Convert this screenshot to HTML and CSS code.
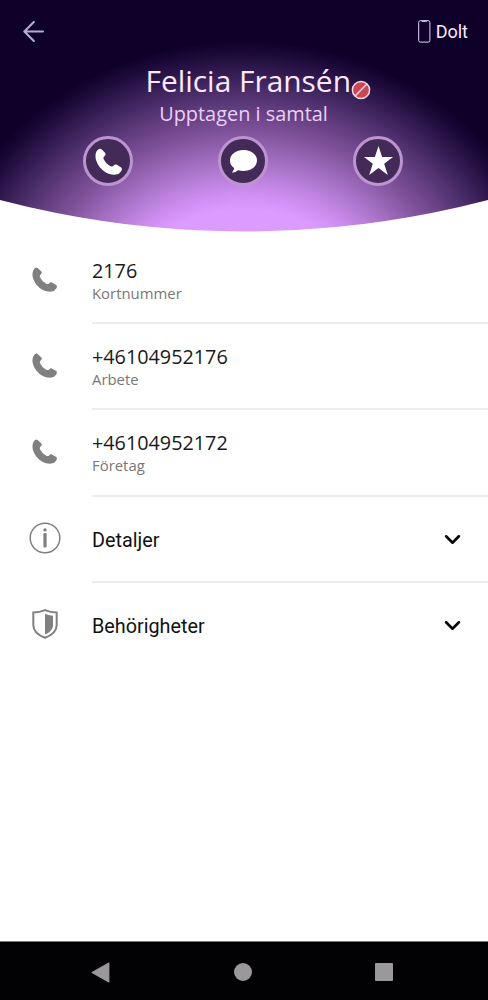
FILE: index.html
```html
<!DOCTYPE html>
<html lang="sv">
<head>
<meta charset="utf-8">
<title>Felicia Fransén</title>
<link rel="stylesheet" href="styles.css">
</head>
<body>
<svg class="defs" width="0" height="0">
  <symbol id="phone" viewBox="0 0 26 26">
    <path d="M1.500 3.200Q3.400 .2 5.300 .7Q6.600 1.200 9.800 4.800Q10.800 6.300 9.200 7.600Q7.700 9 8.300 10.600Q10.500 15.400 15.200 17.600Q16.900 18.200 18 16.800Q19.200 15.300 20.700 16L25.200 18.800Q26.600 20.200 25.200 22.300Q23.600 25.100 20 25.600Q11 26.300 4.400 18.200Q-1.600 9.800 1.500 3.200Z"/>
  </symbol>
  <symbol id="chevron" viewBox="0 0 16 10">
    <path d="M2 2l6 6 6-6" fill="none" stroke="currentColor" stroke-width="2.500" stroke-linecap="round" stroke-linejoin="round"/>
  </symbol>
</svg>
<div class="screen">
  <header class="hero">
    <div class="topbar">
      <svg class="back" viewBox="0 0 20 20"><path d="M19 10H1.500M10.300 1L1.300 10l9 9" /></svg>
      <div class="visibility">
        <svg class="device" viewBox="0 0 13 23"><rect x=".7" y=".7" width="11.200" height="21.400" rx="1.700"/><path d="M3.800 1.300h5"/></svg>
        <span>Dolt</span>
      </div>
    </div>
    <h1 class="name"><span class="name-text">Felicia Fransén</span><svg class="busy" viewBox="0 0 20 20"><circle cx="10" cy="10" r="8.600"/><path d="M4.300 15.700L15.700 4.300"/></svg></h1>
    <p class="status">Upptagen i samtal</p>
    <div class="actions">
      <button class="action"><svg class="a-phone"><use href="#phone"/></svg></button>
      <button class="action"><svg class="a-chat" viewBox="0 0 27 23"><path d="M13.500 0C21 0 27 4.600 27 10.500S21 21 13.500 21Q10.800 21 8.200 20.200Q5.500 22.500 1.900 22.800Q4 20.500 4.100 18Q0 15 0 10.500C0 4.600 6 0 13.500 0Z"/></svg></button>
      <button class="action"><svg class="a-star" viewBox="0 0 28 28"><path d="M14 0l3.500 10.500H28l-8.500 6.600L23 28l-9-6.700L5 28l3.500-10.900L0 10.500h10.500z"/></svg></button>
    </div>
  </header>
  <main class="list">
    <div class="row"><div class="lead"><svg class="phone"><use href="#phone"/></svg></div><div class="cell"><div class="number">2176</div><div class="label">Kortnummer</div></div></div>
    <div class="row"><div class="lead"><svg class="phone"><use href="#phone"/></svg></div><div class="cell"><div class="number">+46104952176</div><div class="label">Arbete</div></div></div>
    <div class="row"><div class="lead"><svg class="phone"><use href="#phone"/></svg></div><div class="cell"><div class="number">+46104952172</div><div class="label">Företag</div></div></div>
    <div class="row"><div class="lead"><svg class="info" viewBox="0 0 32 32"><circle cx="16" cy="16" r="14.800" fill="none" stroke="currentColor" stroke-width="1.500"/><circle cx="16" cy="7.900" r="1.700"/><rect x="14.400" y="11" width="3.200" height="14.500" rx="1.200"/></svg></div><div class="cell expand"><span>Detaljer</span><svg class="chevron"><use href="#chevron"/></svg></div></div>
    <div class="row"><div class="lead"><svg class="shield" viewBox="0 0 26 30"><path d="M13 1.200C9 3 5 3.600 1.300 3.600V16C1.300 22 7 26.500 13 28.700C19 26.500 24.700 22 24.700 16V3.600C21 3.600 17 3 13 1.200Z" fill="none" stroke="currentColor" stroke-width="2"/><path d="M13 4.800C15.500 6 18 6.500 21 6.800V16.500C21 20.500 17.500 23.600 13 25.600Z"/></svg></div><div class="cell expand last"><span>Behörigheter</span><svg class="chevron"><use href="#chevron"/></svg></div></div>
  </main>
  <nav class="navbar">
    <svg class="nav-back" viewBox="0 0 18 20"><path d="M17 1v18L1 10z"/></svg>
    <svg class="nav-home" viewBox="0 0 18 18"><circle cx="9" cy="9" r="9"/></svg>
    <svg class="nav-recent" viewBox="0 0 18 18"><rect width="18" height="18" rx="1"/></svg>
  </nav>
</div>
</body>
</html>
```
FILE: styles.css
```css
* { box-sizing: border-box; }
body { margin: 0; background: #fff; font-family: "Open Sans", "Noto Sans", sans-serif; }
svg { display: block; }
.defs { position: absolute; }
.screen { width: 488px; height: 1000px; display: flex; flex-direction: column; overflow: hidden; }

.hero {
  height: 238px;
  flex: none;
  color: #fbe9ff;
  background: radial-gradient(ellipse 316px 292px at 244px 332px, #dc9bff 0, #dc9bff 42%, #d08ff4 47%, #ba80db 53%, #a06cbe 60%, #7e5199 69%, #593777 79%, #371e55 88%, #1a0837 96%, #0f002a 100%);
  clip-path: circle(961px at 50% -729.500px);
}
.topbar { height: 62px; padding: 0 20px 0 23px; display: flex; align-items: center; justify-content: space-between; }
.back { width: 21px; height: 21px; fill: none; stroke: #bca9d1; stroke-width: 2; stroke-linecap: round; stroke-linejoin: round; margin-top: 1px; }
.visibility { display: flex; align-items: center; gap: 5px; padding-top: 1px; font: 18px/22px Roboto, sans-serif; }
.device { width: 13px; height: 23px; margin-top: -1px; fill: none; stroke: #e8d5f5; stroke-width: 1; }
.name { margin: 0; height: 38px; display: flex; justify-content: center; font-size: 29.900px; line-height: 37px; font-weight: 400; padding-left: 28px; }
.name-text { width: 205px; white-space: nowrap; }
.busy { width: 20px; height: 20px; margin-top: 18px; fill: #ca4650; stroke: #f4d9ea; stroke-width: 1.500; }
.status { margin: 0; text-align: center; font-size: 19.900px; line-height: 27px; color: #ecd0fa; padding-right: 1px; }
.actions { padding: 9px 85px 0 83px; display: flex; justify-content: space-between; }
.action { width: 50px; height: 50px; padding: 0; border: 3px solid #bd94d0; border-radius: 50%; background: #432a59; display: grid; place-items: center; }
.action svg { fill: #fff; }
.a-phone { width: 27px; height: 27px; }
.a-chat { width: 27px; height: 23px; }
.a-star { width: 29px; height: 29px; margin-top: -2px; }

.list { flex: 1; }
.row { display: flex; height: 86.200px; }
.lead { width: 92px; padding: 0 18px 3px 15px; display: grid; place-items: center; color: #808080; }
.lead svg { fill: currentColor; }
.phone { width: 25px; height: 25px; }
.info { width: 32px; height: 32px; }
.shield { width: 26px; height: 30px; }
.cell { flex: 1; border-bottom: 2px solid #ededed; padding-top: 20px; }
.number { font-size: 19.800px; line-height: 26px; color: #1a1a1a; }
.label { font-size: 14.900px; line-height: 20px; margin-top: -1px; color: #777; }
.expand { padding: 4px 27px 0 0; display: flex; align-items: center; justify-content: space-between; font: 19.800px/24px Roboto, sans-serif; color: #111; }
.last { border-bottom-color: transparent; }
.chevron { width: 17px; height: 11px; margin-top: -3px; color: #080808; }

.navbar { height: 59px; flex: none; background: #020103; border-top: 1px solid #777; padding: 2px 95px 0 91px; display: flex; align-items: center; justify-content: space-between; fill: #9b989c; }
.nav-back { width: 19px; height: 21px; stroke: #9b989c; stroke-linejoin: round; }
.nav-home, .nav-recent { width: 18px; height: 18px; }
```
